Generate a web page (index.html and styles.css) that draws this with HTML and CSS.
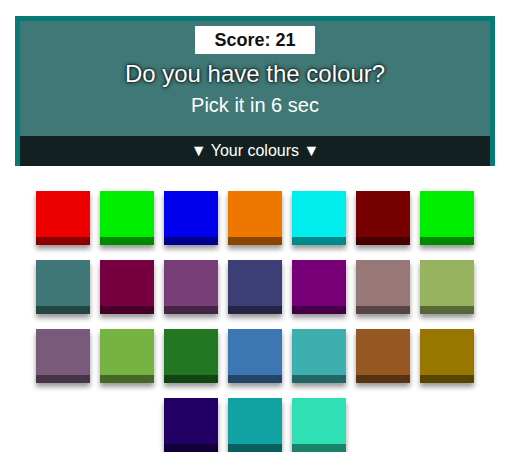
FILE: index.html
```html
<!DOCTYPE html>
<html lang="en">
<head>
    <meta charset="UTF-8">
    <title>Colour Match</title>
    <link rel="stylesheet" href="styles.css">
</head>
<body>
    <!-- game header -->
    <section class="panel">
        <div class="score">Score: 21</div>
        <h1>Do you have the colour?</h1>
        <p class="timer">Pick it in 6 sec</p>
        <div class="bar">&#9660; Your colours &#9660;</div>
    </section>

    <!-- colour swatches -->
    <section class="swatches">
        <div class="swatch" style="background-color: #ee0000;"></div>
        <div class="swatch" style="background-color: #00ee00;"></div>
        <div class="swatch" style="background-color: #0000ee;"></div>
        <div class="swatch" style="background-color: #ee7700;"></div>
        <div class="swatch" style="background-color: #00eeee;"></div>
        <div class="swatch" style="background-color: #770000;"></div>
        <div class="swatch" style="background-color: #00ee00;"></div>

        <div class="swatch" style="background-color: #3e7775;"></div>
        <div class="swatch" style="background-color: #770040;"></div>
        <div class="swatch" style="background-color: #773e77;"></div>
        <div class="swatch" style="background-color: #3e3e77;"></div>
        <div class="swatch" style="background-color: #770077;"></div>
        <div class="swatch" style="background-color: #977777;"></div>
        <div class="swatch" style="background-color: #97b35e;"></div>

        <div class="swatch" style="background-color: #7a5a7a;"></div>
        <div class="swatch" style="background-color: #77b343;"></div>
        <div class="swatch" style="background-color: #227722;"></div>
        <div class="swatch" style="background-color: #3d77b3;"></div>
        <div class="swatch" style="background-color: #3eafaf;"></div>
        <div class="swatch" style="background-color: #975722;"></div>
        <div class="swatch" style="background-color: #977700;"></div>

        <div class="swatch" style="background-color: #220066;"></div>
        <div class="swatch" style="background-color: #11a3a3;"></div>
        <div class="swatch" style="background-color: #2ee0b3;"></div>
    </section>
</body>
</html>
```

FILE: styles.css
```css
* {
    margin: 0;
    padding: 0;
    box-sizing: border-box;
    font-family: 'Liberation Sans', Arial, sans-serif;
}

body {
    background-color: #fff;
    padding: 16px 13px 0 15px;
}

.panel {
    width: 480px;
    background-color: #3f7876;
    border: 5px solid #087a76;
    border-bottom: none;
    text-align: center;
    display: flex;
    flex-direction: column;
    align-items: center;
}

.score {
    margin-top: 5px;
    width: 120px;
    height: 28px;
    line-height: 28px;
    background-color: #fff;
    color: #111;
    font-size: 18px;
    font-weight: bold;
}

.panel h1 {
    margin-top: 6px;
    font-size: 24px;
    font-weight: normal;
    color: #fff;
    line-height: 28px;
    text-shadow: 0 0 4px #000, 0 0 2px #000;
}

.timer {
    margin-top: 5px;
    font-size: 20px;
    color: #fff;
    line-height: 24px;
}

.bar {
    margin-top: 19px;
    width: 100%;
    height: 30px;
    line-height: 30px;
    background-color: #132021;
    color: #fff;
    font-size: 16px;
}

.swatches {
    width: 480px;
    display: flex;
    flex-wrap: wrap;
    justify-content: center;
    column-gap: 10px;
    row-gap: 15px;
    padding: 25px 0 0;
}

.swatch {
    width: 54px;
    height: 54px;
    border-bottom: 8px solid rgba(0, 0, 0, 0.42);
    box-shadow: 0 4px 5px rgba(0, 0, 0, 0.4);
}
```
